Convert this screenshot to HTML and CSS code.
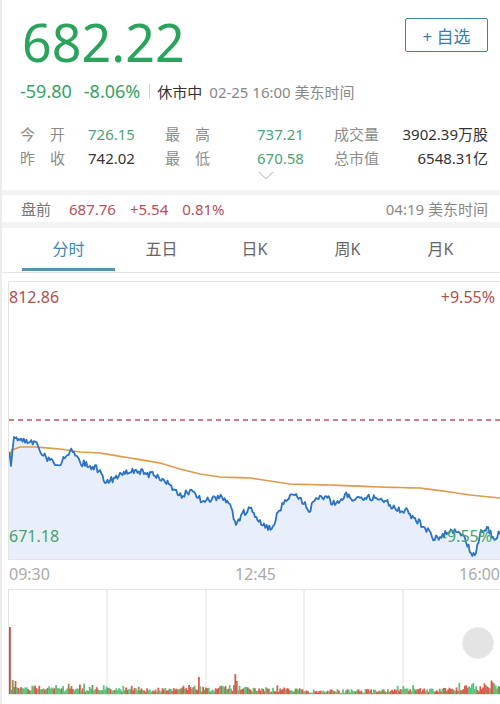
FILE: index.html
```html
<!DOCTYPE html>
<html lang="zh-CN">
<head>
    <meta charset="UTF-8">
    <meta name="viewport" content="width=device-width, initial-scale=1.0">
    <title>行情</title>
    <link rel="stylesheet" href="styles.css">
</head>
<body>
    <div class="page">
        <header class="quote">
            <div class="quote-main">
                <div class="price">682.22</div>
                <button class="watch-btn">+ 自选</button>
            </div>
            <div class="change-row">
                <span class="chg">-59.80</span>
                <span class="chg">-8.06%</span>
                <span class="divider"></span>
                <span class="status">休市中</span>
                <span class="time">02-25 16:00 美东时间</span>
            </div>
            <div class="stats">
                <span class="lbl">今　开</span><span class="val green">726.15</span>
                <span class="lbl">最　高</span><span class="val green">737.21</span>
                <span class="lbl">成交量</span><span class="val right">3902.39万股</span>
                <span class="lbl">昨　收</span><span class="val">742.02</span>
                <span class="lbl">最　低</span><span class="val green">670.58</span>
                <span class="lbl">总市值</span><span class="val right">6548.31亿</span>
            </div>
            <div class="expand">
                <svg width="16" height="9" viewBox="0 0 16 9"><path d="M1 1 L8 8 L15 1" fill="none" stroke="#c9c9c9" stroke-width="1.2"/></svg>
            </div>
        </header>
        <div class="band"></div>
        <div class="premarket">
            <span class="pm-label">盘前</span>
            <span class="pm-val">687.76</span>
            <span class="pm-val">+5.54</span>
            <span class="pm-val">0.81%</span>
            <span class="pm-time">04:19 美东时间</span>
        </div>
        <div class="band wide"></div>
        <nav class="tabs">
            <div class="tab active">分时</div>
            <div class="tab">五日</div>
            <div class="tab">日K</div>
            <div class="tab">周K</div>
            <div class="tab">月K</div>
        </nav>
        <section class="chart">
            <svg id="price-chart" class="chart-svg" width="491" height="277" viewBox="9 282 491 277">
                <path id="price-fill" fill="#e9effa"/>
                <line x1="9" y1="420" x2="500" y2="420" stroke="#b9585c" stroke-width="1.3" stroke-dasharray="5 4"/>
                <polyline id="avg-line" fill="none" stroke="#e09a4c" stroke-width="1.7"/>
                <polyline id="price-line" fill="none" stroke="#2c74c2" stroke-width="1.8" stroke-linejoin="round"/>
            </svg>
            <span class="axis-label top-left">812.86</span>
            <span class="axis-label top-right">+9.55%</span>
            <span class="axis-label bottom-left">671.18</span>
            <span class="axis-label bottom-right">-9.55%</span>
        </section>
        <div class="time-axis">
            <span>09:30</span>
            <span class="mid">12:45</span>
            <span>16:00</span>
        </div>
        <section class="volume">
            <svg id="volume-chart" width="491" height="104" viewBox="9 590 491 104">
                <g stroke="#e2e2e2" stroke-width="1">
                    <line x1="107" y1="590" x2="107" y2="694"/>
                    <line x1="206" y1="590" x2="206" y2="694"/>
                    <line x1="304" y1="590" x2="304" y2="694"/>
                    <line x1="403" y1="590" x2="403" y2="694"/>
                </g>
                <g id="bars"></g>
            </svg>
            <div class="float-btn"></div>
        </section>
    </div>
    <script src="chart.js"></script>
</body>
</html>
```

FILE: styles.css
```css
* {
    box-sizing: border-box;
}
body {
    margin: 0;
    background: #fff;
    font-family: "Noto Sans", "Noto Sans CJK SC", sans-serif;
    color: #333;
}
.page {
    width: 500px;
    height: 704px;
    overflow: hidden;
    border-left: 2px solid #ececec;
}
.quote {
    padding: 0 12px 0 18px;
}
.quote-main {
    display: flex;
    justify-content: space-between;
    align-items: flex-start;
    padding-top: 18px;
}
.price {
    font-size: 52px;
    line-height: 52px;
    margin: -2px 0 3px 2px;
    color: #2ba35d;
}
.watch-btn {
    width: 83px;
    height: 34px;
    border: 1.5px solid #3f82aa;
    border-radius: 2px;
    background: #fff;
    color: #3d7fa9;
    font-family: "Noto Sans", "Noto Sans CJK SC", sans-serif;
    font-size: 17px;
    padding: 0;
}
.change-row {
    display: flex;
    align-items: center;
    height: 24px;
    margin-top: 8px;
    font-size: 15px;
}
.chg {
    color: #38a265;
    font-size: 18px;
    margin-right: 12px;
}
.divider {
    width: 1px;
    height: 14px;
    background: #d0d0d0;
    margin: 0 7px 0 -3px;
}
.status {
    color: #333;
    margin-right: 7px;
}
.time {
    color: #888;
}
.stats {
    display: grid;
    grid-template-columns: 68px 77px 92px 77px auto 1fr;
    margin-top: 19px;
    font-size: 15px;
    line-height: 24px;
}
.lbl {
    color: #8c8c8c;
}
.val {
    color: #333;
}
.val.green {
    color: #4ca375;
}
.val.right {
    text-align: right;
}
.expand {
    display: flex;
    justify-content: center;
    height: 20px;
    padding: 1px 0 0 24px;
}
.band {
    height: 5px;
    background: #f3f3f3;
}
.band.wide {
    height: 6px;
}
.premarket {
    display: flex;
    align-items: center;
    height: 27px;
    padding: 0 12px 0 19px;
    font-size: 15px;
}
.pm-label {
    color: #777;
    margin-right: 18px;
}
.pm-val {
    color: #b4505a;
    margin-right: 14px;
}
.pm-time {
    margin-left: auto;
    color: #888;
}
.tabs {
    display: flex;
    height: 45px;
    padding-left: 20px;
    border-bottom: 1px solid #e6e6e6;
}
.tab {
    width: 93px;
    height: 43px;
    padding-top: 10px;
    text-align: center;
    font-size: 16px;
    line-height: 22px;
    color: #666;
}
.tab.active {
    color: #3f87b2;
    border-bottom: 3px solid #5794b2;
}
.chart {
    position: relative;
    margin: 8px 0 0 6px;
    height: 279px;
    border-top: 1px solid #e4e4e4;
    border-left: 1px solid #e4e4e4;
    border-bottom: 1px solid #e4e4e4;
}
.chart-svg {
    display: block;
}
.axis-label {
    position: absolute;
    font-size: 16px;
    line-height: 20px;
}
.top-left {
    top: 5px;
    left: 0;
    color: #b0504f;
}
.top-right {
    top: 5px;
    right: 5px;
    color: #b0504f;
}
.bottom-left {
    top: 244px;
    left: 0;
    color: #45a469;
}
.bottom-right {
    top: 244px;
    right: 8px;
    color: #45a469;
}
.time-axis {
    display: flex;
    justify-content: space-between;
    height: 29px;
    padding-left: 7px;
    font-size: 16px;
    line-height: 29px;
    color: #aaa;
}
.time-axis .mid {
    margin-left: 2px;
}
.volume {
    position: relative;
    margin-left: 6px;
    height: 106px;
    border-top: 1px solid #e4e4e4;
    border-left: 1px solid #e4e4e4;
    border-bottom: 1px solid #e4e4e4;
}
.volume svg {
    display: block;
}
.float-btn {
    position: absolute;
    left: 453px;
    top: 37px;
    width: 32px;
    height: 32px;
    border-radius: 50%;
    background: #e4e4e4;
    border: 1px solid #ececec;
}
```

FILE: chart.js
```js
function seeded(s) {
    return function () {
        s = (s * 16807) % 2147483647;
        return (s - 1) / 2147483646;
    };
}
var rnd = seeded(20210225);

var pricePts = [
    [9, 452], [11, 466], [14, 437], [20, 440], [30, 442], [38, 446], [42, 455],
    [50, 460], [55, 465], [62, 462], [70, 451], [74, 452], [80, 462], [90, 466],
    [100, 470], [105, 483], [115, 478], [125, 474], [135, 470], [145, 473],
    [155, 476], [165, 482], [175, 490], [183, 496], [190, 490], [198, 498],
    [205, 502], [215, 497], [222, 497], [230, 504], [236, 525], [241, 515],
    [250, 508], [260, 520], [268, 530], [273, 526], [278, 512], [285, 500],
    [295, 495], [301, 498], [309, 512], [316, 498], [326, 496], [335, 505],
    [345, 494], [355, 500], [365, 498], [375, 498], [385, 501], [395, 508],
    [405, 510], [415, 518], [425, 528], [432, 537], [440, 537], [448, 533],
    [456, 532], [465, 538], [471, 553], [476, 553], [481, 530], [487, 527],
    [493, 537], [500, 534]
];
var avgPts = [
    [9, 457], [12, 450], [20, 447], [35, 447], [60, 449], [80, 452], [100, 453],
    [130, 458], [160, 463], [180, 469], [200, 474], [220, 477], [250, 478],
    [270, 481], [290, 484], [330, 485], [380, 487], [420, 488], [450, 492],
    [470, 495], [500, 498]
];

function trace(points, step, jitter) {
    var out = [];
    for (var i = 0; i < points.length - 1; i++) {
        var a = points[i], b = points[i + 1];
        var n = Math.max(1, Math.round((b[0] - a[0]) / step));
        for (var k = 0; k < n; k++) {
            var t = k / n;
            var y = a[1] + (b[1] - a[1]) * t;
            if (k > 0) y += (rnd() - 0.5) * jitter;
            out.push([a[0] + (b[0] - a[0]) * t, y]);
        }
    }
    out.push(points[points.length - 1]);
    return out;
}

function toStr(pts) {
    return pts.map(function (p) { return p[0].toFixed(1) + ',' + p[1].toFixed(1); }).join(' ');
}

var price = trace(pricePts, 1.3, 7);
document.getElementById('price-line').setAttribute('points', toStr(price));
document.getElementById('avg-line').setAttribute('points', toStr(trace(avgPts, 10, 0)));
document.getElementById('price-fill').setAttribute('d', 'M9,559 L' + toStr(price).replace(/ /g, ' L') + ' L500,559 Z');

// volume bars
var spikes = { 9: 67, 12: 14, 15: 13, 18: 11, 92: 9, 198: 17, 234: 20, 236: 13, 399: 11 };
var colors = ['#da5a4d', '#5cc37c', '#7e9a55'];
var bars = '';
for (var x = 9; x < 500; x += 1.4) {
    var key = Math.round(x);
    var h = 2 + rnd() * 4;
    if (x < 110 || (x > 180 && x < 250)) h += rnd() * 3;
    if (x > 300 && x < 400) h -= 1;
    if (rnd() < 0.15) h += rnd() * 5;
    if (x > 455) h += rnd() * 6;
    if (spikes[key]) h = spikes[key];
    var r = rnd();
    var color = r < 0.45 ? colors[0] : (r < 0.9 ? colors[1] : colors[2]);
    if (key === 9) color = '#cf4a46';
    bars += '<rect x="' + x.toFixed(1) + '" y="' + (694 - h).toFixed(1) + '" width="1.8" height="' + h.toFixed(1) + '" fill="' + color + '"/>';
}
document.getElementById('bars').innerHTML = bars;
```
